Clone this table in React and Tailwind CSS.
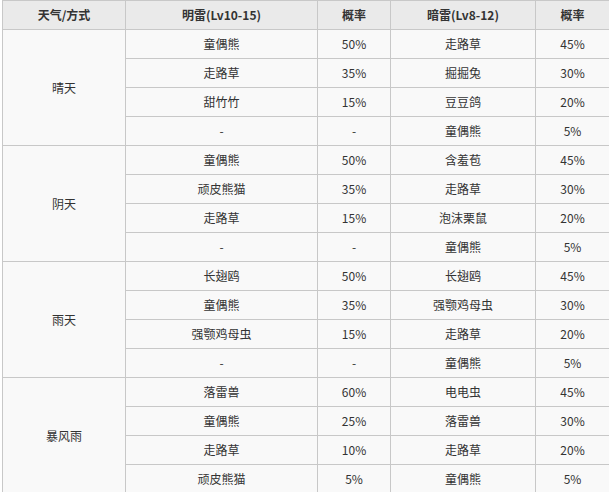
const groups = [
  {
    weather: '晴天',
    rows: [
      ['童偶熊', '50%', '走路草', '45%'],
      ['走路草', '35%', '掘掘兔', '30%'],
      ['甜竹竹', '15%', '豆豆鸽', '20%'],
      ['-', '-', '童偶熊', '5%'],
    ],
  },
  {
    weather: '阴天',
    rows: [
      ['童偶熊', '50%', '含羞苞', '45%'],
      ['顽皮熊猫', '35%', '走路草', '30%'],
      ['走路草', '15%', '泡沫栗鼠', '20%'],
      ['-', '-', '童偶熊', '5%'],
    ],
  },
  {
    weather: '雨天',
    rows: [
      ['长翅鸥', '50%', '长翅鸥', '45%'],
      ['童偶熊', '35%', '强颚鸡母虫', '30%'],
      ['强颚鸡母虫', '15%', '走路草', '20%'],
      ['-', '-', '童偶熊', '5%'],
    ],
  },
  {
    weather: '暴风雨',
    rows: [
      ['落雷兽', '60%', '电电虫', '45%'],
      ['童偶熊', '25%', '落雷兽', '30%'],
      ['走路草', '10%', '走路草', '20%'],
      ['顽皮熊猫', '5%', '童偶熊', '5%'],
    ],
  },
];

const cell = 'border border-[#c8c8c8] h-[29px] p-0 text-center align-middle';

const App = () => {
  return (
    <div className="w-[609px] h-[492px] overflow-hidden bg-white pl-[2px] font-['Microsoft_YaHei','Noto_Sans_CJK_SC',sans-serif] text-[12px] text-[#333]">
      <table className="table-fixed border-collapse w-[607px]">
        <colgroup>
          <col className="w-[123px]" />
          <col className="w-[192px]" />
          <col className="w-[73px]" />
          <col className="w-[145px]" />
          <col className="w-[74px]" />
        </colgroup>
        <thead>
          <tr className="bg-[#eaeaea] font-bold">
            <th className={cell}>天气/方式</th>
            <th className={cell}>明雷(Lv10-15)</th>
            <th className={cell}>概率</th>
            <th className={cell}>暗雷(Lv8-12)</th>
            <th className={cell}>概率</th>
          </tr>
        </thead>
        <tbody className="bg-[#f9f9f9]">
          {groups.map((g) =>
            g.rows.map((r, i) => (
              <tr key={g.weather + i}>
                {i === 0 && (
                  <td rowSpan={4} className={cell}>
                    {g.weather}
                  </td>
                )}
                {r.map((v, j) => (
                  <td key={j} className={cell}>
                    {v}
                  </td>
                ))}
              </tr>
            ))
          )}
        </tbody>
      </table>
    </div>
  );
};

export default App;
